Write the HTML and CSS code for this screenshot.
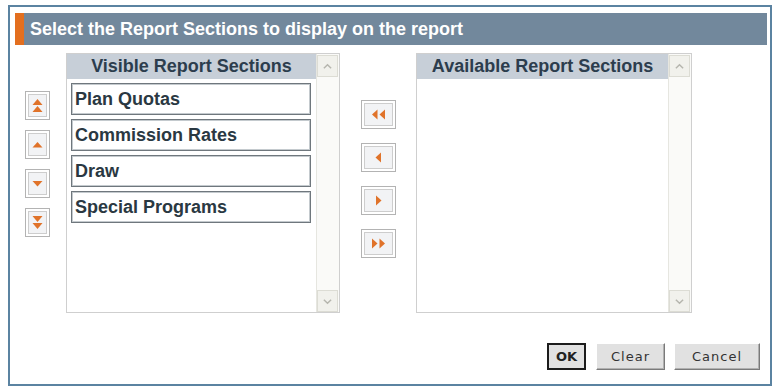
FILE: index.html
```html
<!DOCTYPE html>
<html lang="en">
<head>
    <meta charset="UTF-8">
    <title>Report Sections</title>
    <link rel="stylesheet" href="styles.css">
</head>
<body>
    <div class="dialog">
        <div class="dialog-title">Select the Report Sections to display on the report</div>

        <div class="dialog-body">
            <!-- order buttons for the visible list -->
            <div class="order-btns">
                <button class="arrow-btn" title="Move to top">
                    <svg width="23" height="27" viewBox="0 0 23 27"><polygon points="6.5,13 11.5,7 16.5,13"/><polygon points="6.5,20 11.5,14 16.5,20"/></svg>
                </button>
                <button class="arrow-btn" title="Move up">
                    <svg width="23" height="27" viewBox="0 0 23 27"><polygon points="6.5,16.5 11.5,11 16.5,16.5"/></svg>
                </button>
                <button class="arrow-btn" title="Move down">
                    <svg width="23" height="27" viewBox="0 0 23 27"><polygon points="6.5,11 16.5,11 11.5,16.5"/></svg>
                </button>
                <button class="arrow-btn" title="Move to bottom">
                    <svg width="23" height="27" viewBox="0 0 23 27"><polygon points="6.5,7 16.5,7 11.5,13"/><polygon points="6.5,14 16.5,14 11.5,20"/></svg>
                </button>
            </div>

            <div class="listbox visible">
                <div class="list-main">
                    <div class="list-head">Visible Report Sections</div>
                    <ul class="items">
                        <li>Plan Quotas</li>
                        <li>Commission Rates</li>
                        <li>Draw</li>
                        <li>Special Programs</li>
                    </ul>
                </div>
                <div class="scrollbar">
                    <span class="sb-btn"><svg width="21" height="21" viewBox="0 0 21 21"><polyline points="6.5,12.5 10.5,8.5 14.5,12.5"/></svg></span>
                    <span class="sb-btn"><svg width="21" height="21" viewBox="0 0 21 21"><polyline points="6.5,8.5 10.5,12.5 14.5,8.5"/></svg></span>
                </div>
            </div>

            <!-- move buttons between the lists -->
            <div class="move-btns">
                <button class="arrow-btn wide" title="Add all">
                    <svg width="33" height="27" viewBox="0 0 33 27"><polygon points="15.5,8.5 15.5,18.5 10,13.5"/><polygon points="23,8.5 23,18.5 17.5,13.5"/></svg>
                </button>
                <button class="arrow-btn wide" title="Add">
                    <svg width="33" height="27" viewBox="0 0 33 27"><polygon points="19,8.5 19,18.5 13.5,13.5"/></svg>
                </button>
                <button class="arrow-btn wide" title="Remove">
                    <svg width="33" height="27" viewBox="0 0 33 27"><polygon points="14,8.5 14,18.5 19.5,13.5"/></svg>
                </button>
                <button class="arrow-btn wide" title="Remove all">
                    <svg width="33" height="27" viewBox="0 0 33 27"><polygon points="10,8.5 10,18.5 15.5,13.5"/><polygon points="17.5,8.5 17.5,18.5 23,13.5"/></svg>
                </button>
            </div>

            <div class="listbox available">
                <div class="list-main">
                    <div class="list-head">Available Report Sections</div>
                    <ul class="items"></ul>
                </div>
                <div class="scrollbar">
                    <span class="sb-btn"><svg width="21" height="21" viewBox="0 0 21 21"><polyline points="6.5,12.5 10.5,8.5 14.5,12.5"/></svg></span>
                    <span class="sb-btn"><svg width="21" height="21" viewBox="0 0 21 21"><polyline points="6.5,8.5 10.5,12.5 14.5,8.5"/></svg></span>
                </div>
            </div>
        </div>

        <div class="dialog-actions">
            <button class="action-btn ok">OK</button>
            <button class="action-btn clear">Clear</button>
            <button class="action-btn cancel">Cancel</button>
        </div>
    </div>
</body>
</html>
```

FILE: styles.css
```css
body {
    margin: 0;
    background-color: #ffffff;
    font-family: "Liberation Sans", Arial, sans-serif;
}

.dialog {
    margin: 5px 0 0 8px;
    width: 764px;
    height: 381px;
    box-sizing: border-box;
    border: 2px solid #5b83a1;
    padding: 6px 3px 0 5px;
}

.dialog-title {
    height: 32px;
    line-height: 32px;
    background-color: #72889c;
    border-left: 9px solid #e36f1f;
    padding-left: 6px;
    color: #ffffff;
    font-size: 18px;
    font-weight: bold;
    white-space: nowrap;
}

.dialog-body {
    display: flex;
    padding: 8px 0 0 10px;
}

/* arrow buttons */
.order-btns,
.move-btns {
    display: flex;
    flex-direction: column;
}

.order-btns {
    padding-top: 38px;
    gap: 10px;
}

.move-btns {
    margin-left: 21px;
    padding-top: 47px;
    gap: 14px;
}

.arrow-btn {
    width: 25px;
    height: 29px;
    box-sizing: border-box;
    padding: 0;
    border: 1px solid #b3b3b3;
    background-color: #f2f3f5;
    box-shadow: inset 0 0 0 2px #ffffff, inset 0 0 0 3px #cdcdcd;
    display: flex;
    cursor: pointer;
}

.arrow-btn.wide {
    width: 35px;
}

.arrow-btn svg {
    flex: none;
}

.arrow-btn polygon {
    fill: #e0732a;
}

/* list boxes */
.listbox {
    display: flex;
    height: 260px;
    box-sizing: border-box;
    border: 1px solid #cfcfcf;
    background-color: #ffffff;
}

.listbox.visible {
    margin-left: 16px;
    width: 274px;
}

.listbox.available {
    margin-left: 20px;
    width: 276px;
}

.list-main {
    flex: 1;
}

.list-head {
    height: 25px;
    line-height: 25px;
    background-color: #c7cfd8;
    color: #2c3d4d;
    font-size: 18px;
    font-weight: bold;
    text-align: center;
    white-space: nowrap;
}

.items {
    list-style: none;
    margin: 0;
    padding: 4px 5px 0 4px;
}

.items li {
    height: 32px;
    box-sizing: border-box;
    margin-bottom: 4px;
    border: 1px solid #6f777d;
    box-shadow: inset 0 0 0 1px #c4cace;
    padding-left: 3px;
    line-height: 30px;
    color: #2a3842;
    font-size: 18px;
    font-weight: bold;
}

.scrollbar {
    width: 23px;
    box-sizing: border-box;
    border-left: 1px solid #e6e6e0;
    background-color: #fafaf8;
    display: flex;
    flex-direction: column;
    justify-content: space-between;
    padding-top: 1px;
}

.sb-btn {
    display: flex;
    width: 21px;
    height: 22px;
    box-sizing: border-box;
    border: 1px solid #dcdcd4;
    background-color: #f1f1ec;
}

.sb-btn polyline {
    fill: none;
    stroke: #b6b6ae;
    stroke-width: 1.6;
}

/* bottom buttons */
.dialog-actions {
    display: flex;
    justify-content: flex-end;
    margin-top: 30px;
    padding-right: 7px;
}

.action-btn {
    height: 27px;
    box-sizing: border-box;
    padding: 0;
    background-color: #e1e1e1;
    border: 1px solid;
    border-color: #ffffff #7a7a7a #7a7a7a #ffffff;
    box-shadow: inset -1px -1px 0 #b0b0b0;
    font-family: "DejaVu Sans", Verdana, sans-serif;
    font-size: 13px;
    letter-spacing: 1px;
    color: #333333;
    cursor: pointer;
}

.action-btn.ok {
    width: 39px;
    border: 2px solid #1c1c1c;
    box-shadow: none;
    font-weight: bold;
    letter-spacing: 0;
    color: #222222;
}

.action-btn.clear {
    width: 69px;
    margin-left: 10px;
}

.action-btn.cancel {
    width: 86px;
    margin-left: 9px;
}
```
